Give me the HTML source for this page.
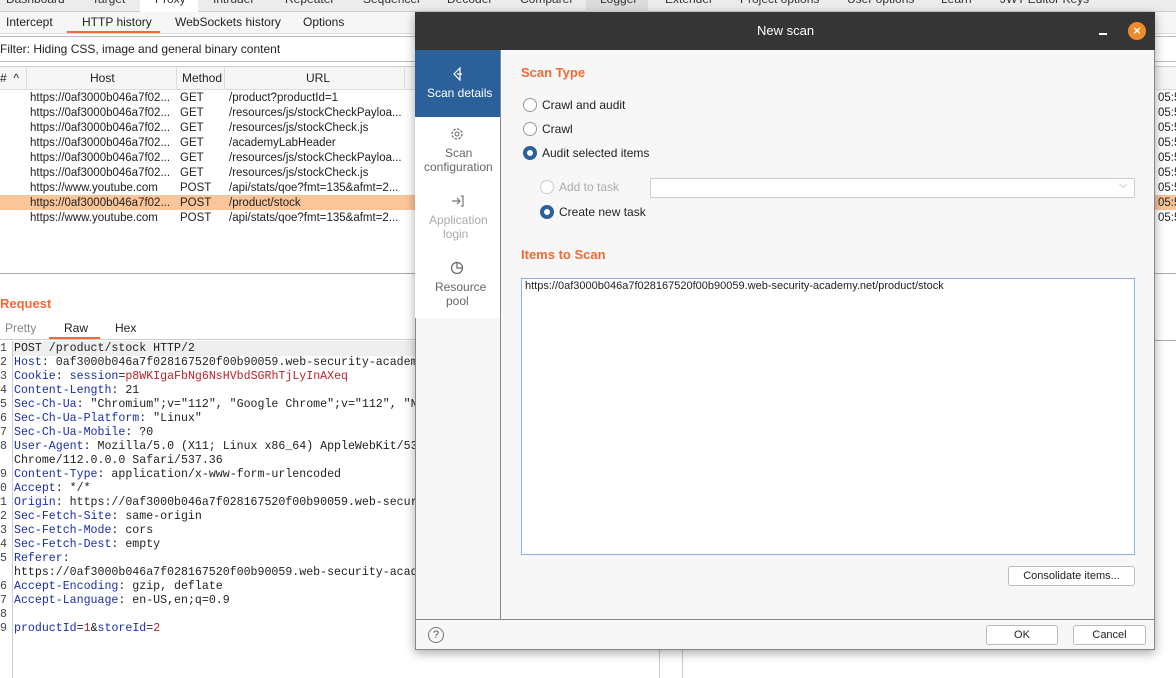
<!DOCTYPE html>
<html><head><style>
*{box-sizing:border-box;margin:0;padding:0}
body{width:1176px;height:678px;overflow:hidden;background:#fff;font-family:"Liberation Sans",sans-serif;font-size:12px;color:#222;position:relative}
.a{position:absolute;white-space:nowrap}
.mono{font-family:"Liberation Mono",monospace;font-size:11.6px}
.k{color:#1a2fa8}.r{color:#c0222a}
.t{font-size:11.5px}
</style></head><body>
<!-- top tabs -->
<div class="a" style="left:0;top:0;width:1176px;height:12px;background:#ececec;border-bottom:1px solid #ccc"></div>
<div class="a" style="left:140px;top:0;width:58px;height:12px;background:#fff"></div>
<div class="a" style="left:586px;top:0;width:62px;height:12px;background:#dcdcdc"></div>
<div class="a" style="top:-8px;left:0;width:1176px;height:20px;font-size:12px;color:#333">
<span class="a" style="left:6px">Dashboard</span><span class="a" style="left:92px">Target</span><span class="a" style="left:155px">Proxy</span><span class="a" style="left:213px">Intruder</span><span class="a" style="left:285px">Repeater</span><span class="a" style="left:363px">Sequencer</span><span class="a" style="left:447px">Decoder</span><span class="a" style="left:520px">Comparer</span><span class="a" style="left:600px">Logger</span><span class="a" style="left:665px">Extender</span><span class="a" style="left:740px">Project options</span><span class="a" style="left:847px">User options</span><span class="a" style="left:941px">Learn</span><span class="a" style="left:1000px">JWT Editor Keys</span></div>
<!-- sub tabs -->
<div class="a" style="left:0;top:12px;width:1176px;height:22px;background:#f6f6f6;border-bottom:1px solid #ddd"></div>
<span class="a" style="left:6px;top:15px">Intercept</span>
<span class="a" style="left:82px;top:15px">HTTP history</span>
<div class="a" style="left:67px;top:31px;width:93px;height:2px;background:#f06a35"></div>
<span class="a" style="left:175px;top:15px">WebSockets history</span>
<span class="a" style="left:303px;top:15px">Options</span>
<div class="a" style="left:0;top:36px;width:1176px;height:26px;border-top:1px solid #bbb;border-bottom:1px solid #bbb;background:#fff"></div>
<span class="a" style="left:0;top:42px">Filter: Hiding CSS, image and general binary content</span>
<!-- table header -->
<div class="a" style="left:0;top:66px;width:1176px;height:24px;background:#f6f6f6;border-bottom:1px solid #ddd;border-top:1px solid #ccc"></div>
<span class="a" style="left:0;top:71px">#&nbsp;&nbsp;^</span>
<div class="a" style="left:26px;top:66px;width:1px;height:24px;background:#ddd"></div>
<span class="a" style="left:90px;top:71px">Host</span>
<div class="a" style="left:176px;top:66px;width:1px;height:24px;background:#ddd"></div>
<span class="a" style="left:182px;top:71px">Method</span>
<div class="a" style="left:224px;top:66px;width:1px;height:24px;background:#ddd"></div>
<span class="a" style="left:306px;top:71px">URL</span>
<div class="a" style="left:404px;top:66px;width:1px;height:24px;background:#ddd"></div>
<div class="a" style="left:0;top:195px;width:1176px;height:15px;background:#fbc59a"></div>
<div class="a t" style="left:30px;top:91px;line-height:15px">https://0af3000b046a7f02...<br>https://0af3000b046a7f02...<br>https://0af3000b046a7f02...<br>https://0af3000b046a7f02...<br>https://0af3000b046a7f02...<br>https://0af3000b046a7f02...<br>https://www.youtube.com<br>https://0af3000b046a7f02...<br>https://www.youtube.com</div>
<div class="a t" style="left:180px;top:91px;line-height:15px">GET<br>GET<br>GET<br>GET<br>GET<br>GET<br>POST<br>POST<br>POST</div>
<div class="a t" style="left:229px;top:91px;line-height:15px">/product?productId=1<br>/resources/js/stockCheckPayloa...<br>/resources/js/stockCheck.js<br>/academyLabHeader<br>/resources/js/stockCheckPayloa...<br>/resources/js/stockCheck.js<br>/api/stats/qoe?fmt=135&amp;afmt=2...<br>/product/stock<br>/api/stats/qoe?fmt=135&amp;afmt=2...</div>
<div class="a t" style="left:1158px;top:91px;line-height:15px">05:5<br>05:5<br>05:5<br>05:5<br>05:5<br>05:5<br>05:5<br>05:5<br>05:5</div>
<div class="a" style="left:0;top:273px;width:1176px;height:1px;background:#aaa"></div>
<div class="a" style="left:1155px;top:340px;width:21px;height:1px;background:#aaa"></div>
<!-- request -->
<span class="a" style="left:0;top:296px;color:#f06a35;font-weight:bold;font-size:13px">Request</span>
<span class="a" style="left:5px;top:321px;color:#888">Pretty</span>
<span class="a" style="left:64px;top:321px">Raw</span>
<div class="a" style="left:49px;top:337px;width:51px;height:2px;background:#f06a35"></div>
<span class="a" style="left:115px;top:321px">Hex</span>
<div class="a" style="left:0;top:339px;width:660px;height:1px;background:#ccc"></div>
<div class="a" style="left:12px;top:341px;width:1px;height:337px;background:#ccc"></div>
<div class="a" style="left:13px;top:341px;width:647px;height:15px;background:#efefef"></div>
<div class="a" style="left:659px;top:640px;width:1px;height:38px;background:#ccc"></div>
<div class="a" style="left:682px;top:640px;width:1px;height:38px;background:#ccc"></div>
<div class="a mono" style="left:0;top:342px;line-height:14px;color:#444">1<br>2<br>3<br>4<br>5<br>6<br>7<br>8<br><br>9<br>0<br>1<br>2<br>3<br>4<br>5<br><br>6<br>7<br>8<br>9</div>
<div class="a mono" style="left:14px;top:342px;line-height:14px;color:#222">POST /product/stock HTTP/2<br><span class="k">Host</span>: 0af3000b046a7f028167520f00b90059.web-security-academy<br><span class="k">Cookie</span>: <span class="k">session</span>=<span class="r">p8WKIgaFbNg6NsHVbdSGRhTjLyInAXeq</span><br><span class="k">Content-Length</span>: 21<br><span class="k">Sec-Ch-Ua</span>: "Chromium";v="112", "Google Chrome";v="112", "N<br><span class="k">Sec-Ch-Ua-Platform</span>: "Linux"<br><span class="k">Sec-Ch-Ua-Mobile</span>: ?0<br><span class="k">User-Agent</span>: Mozilla/5.0 (X11; Linux x86_64) AppleWebKit/53<br>Chrome/112.0.0.0 Safari/537.36<br><span class="k">Content-Type</span>: application/x-www-form-urlencoded<br><span class="k">Accept</span>: */*<br><span class="k">Origin</span>: https://0af3000b046a7f028167520f00b90059.web-secur<br><span class="k">Sec-Fetch-Site</span>: same-origin<br><span class="k">Sec-Fetch-Mode</span>: cors<br><span class="k">Sec-Fetch-Dest</span>: empty<br><span class="k">Referer</span>:<br>https://0af3000b046a7f028167520f00b90059.web-security-acad<br><span class="k">Accept-Encoding</span>: gzip, deflate<br><span class="k">Accept-Language</span>: en-US,en;q=0.9<br><br><span class="k">productId</span>=<span class="r">1</span>&amp;<span class="k">storeId</span>=<span class="r">2</span></div>
<!-- dialog -->
<div class="a" style="left:415px;top:12px;width:740px;height:638px;background:#f7f7f7;box-shadow:0 3px 10px rgba(0,0,0,.35);border:1px solid #888"></div>
<div class="a" style="left:415px;top:12px;width:740px;height:38px;background:#353535"></div>
<span class="a" style="left:757px;top:23px;color:#fff;font-size:13px">New scan</span>
<div class="a" style="left:1099px;top:33px;width:8px;height:2px;background:#fff"></div>
<div class="a" style="left:1128px;top:22px;width:18px;height:18px;border-radius:50%;background:#ef8a2a;color:#fff;font-size:13px;font-weight:bold;text-align:center;line-height:18px">×</div>
<div class="a" style="left:415px;top:50px;width:85px;height:268px;background:#fff"></div>
<div class="a" style="left:500px;top:50px;width:1px;height:569px;background:#888"></div>
<div class="a" style="left:415px;top:50px;width:85px;height:67px;background:#2c609a"></div>
<svg class="a" style="left:450px;top:66px" width="16" height="16" viewBox="0 0 16 16"><path d="M10 2 L4 8 L10 14 Z M7 8 L12 8" fill="none" stroke="#fff" stroke-width="1.2"/></svg>
<span class="a" style="left:427px;top:86px;color:#fff">Scan details</span>
<svg class="a" style="left:449px;top:126px" width="16" height="16" viewBox="0 0 16 16"><circle cx="8" cy="8" r="5" fill="none" stroke="#666" stroke-width="1.2" stroke-dasharray="2.5 1.4"/><circle cx="8" cy="8" r="2" fill="none" stroke="#666"/></svg>
<span class="a" style="left:445px;top:146px;color:#666">Scan</span>
<span class="a" style="left:424px;top:160px;color:#666">configuration</span>
<svg class="a" style="left:450px;top:193px" width="16" height="16" viewBox="0 0 16 16"><path d="M2 8H10M7 5L10 8L7 11M11 3H13V13H11" fill="none" stroke="#777" stroke-width="1.2"/></svg>
<span class="a" style="left:429px;top:213px;color:#aaa">Application</span>
<span class="a" style="left:443px;top:227px;color:#aaa">login</span>
<svg class="a" style="left:449px;top:259px" width="16" height="16" viewBox="0 0 16 16"><circle cx="8" cy="9" r="5.5" fill="none" stroke="#666" stroke-width="1.2"/><path d="M8 3.5V9H13.5" fill="none" stroke="#666" stroke-width="1.2"/></svg>
<span class="a" style="left:435px;top:280px;color:#666">Resource</span>
<span class="a" style="left:446px;top:294px;color:#666">pool</span>
<span class="a" style="left:521px;top:65px;color:#f06a35;font-weight:bold;font-size:13px">Scan Type</span>
<div class="a" style="left:523px;top:98px;width:14px;height:14px;border-radius:50%;border:1px solid #999;background:#fff"></div>
<span class="a" style="left:542px;top:98px">Crawl and audit</span>
<div class="a" style="left:523px;top:122px;width:14px;height:14px;border-radius:50%;border:1px solid #999;background:#fff"></div>
<span class="a" style="left:542px;top:122px">Crawl</span>
<div class="a" style="left:523px;top:146px;width:14px;height:14px;border-radius:50%;border:4px solid #2c609a;background:#fff"></div>
<span class="a" style="left:542px;top:146px">Audit selected items</span>
<div class="a" style="left:540px;top:180px;width:14px;height:14px;border-radius:50%;border:1px solid #ccc;background:#fff"></div>
<span class="a" style="left:559px;top:180px;color:#aaa">Add to task</span>
<div class="a" style="left:650px;top:178px;width:485px;height:20px;border:1px solid #ccc;border-radius:2px;background:#fff"></div>
<span class="a" style="left:1119px;top:179px;color:#999;font-size:11px">⌵</span>
<div class="a" style="left:540px;top:205px;width:14px;height:14px;border-radius:50%;border:4px solid #2c609a;background:#fff"></div>
<span class="a" style="left:559px;top:205px">Create new task</span>
<span class="a" style="left:521px;top:247px;color:#f06a35;font-weight:bold;font-size:13px">Items to Scan</span>
<div class="a" style="left:521px;top:278px;width:614px;height:277px;border:1px solid #8fb0d8;background:#fff"></div>
<span class="a" style="left:525px;top:280px;font-size:11px">https://0af3000b046a7f028167520f00b90059.web-security-academy.net/product/stock</span>
<div class="a" style="left:1008px;top:566px;width:127px;height:20px;border:1px solid #bbb;border-radius:3px;background:#fff;font-size:11px;text-align:center;line-height:18px">Consolidate items...</div>
<div class="a" style="left:415px;top:619px;width:740px;height:1px;background:#888"></div>
<div class="a" style="left:428px;top:627px;width:16px;height:16px;border-radius:50%;border:1px solid #777;text-align:center;font-size:11px;line-height:14px;color:#555">?</div>
<div class="a" style="left:986px;top:625px;width:72px;height:20px;border:1px solid #bbb;border-radius:3px;background:#fff;font-size:11px;text-align:center;line-height:18px">OK</div>
<div class="a" style="left:1073px;top:625px;width:73px;height:20px;border:1px solid #bbb;border-radius:3px;background:#fff;font-size:11px;text-align:center;line-height:18px">Cancel</div>
</body></html>
